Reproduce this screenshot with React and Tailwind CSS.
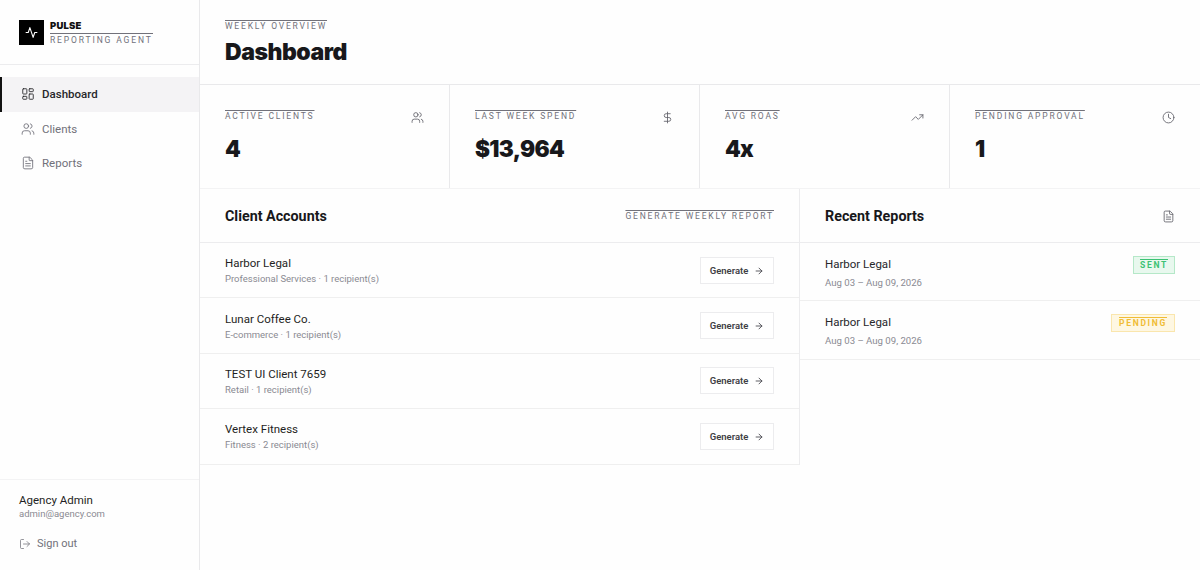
import React from "react";
import { LayoutDashboard, Users, FileText, LogOut, DollarSign, TrendingUp, Clock, ArrowRight } from "lucide-react";

const body = "font-['Roboto',sans-serif]";
const heavy = "font-['Inter',sans-serif] font-black";

function Label({ children, className = "" }) {
  return <span className={`text-[8.5px] leading-[13px] tracking-[0.215em] uppercase overline decoration-1 text-[#71717a] ${className}`}>{children}</span>;
}

function NavItem({ icon: Icon, label, active }) {
  return (
    <div className={`h-[34.5px] flex items-center gap-[7px] pl-[19px] text-[11.5px] border-l-2 ${active ? "bg-[#f4f3f5] border-[#111] text-[#27272a] font-medium" : "border-transparent text-[#71717a]"}`}>
      <Icon size={14} strokeWidth={1.5} className={active ? "text-[#27272a]" : "text-[#71717a]"} />
      <span className="pt-[1px]">{label}</span>
    </div>
  );
}

function Stat({ label, value, icon: Icon, last }) {
  return (
    <div className={`w-[250px] h-full px-[25px] pt-[25px] ${last ? "" : "border-r border-[#e9e9eb]"}`}>
      <div className="flex justify-between items-start">
        <Label>{label}</Label>
        <Icon size={13} strokeWidth={1.6} className="text-[#63636b] mt-[1px]" />
      </div>
      <div className={`${heavy} text-[22.5px] leading-[28px] mt-[11px] text-[#18181b] tracking-[-0.03em]`}>{value}</div>
    </div>
  );
}

function ClientRow({ name, sub }) {
  return (
    <div className="h-[55.4px] flex items-center justify-between pl-[25px] pr-[25px] border-b border-[#efefef]">
      <div>
        <div className="text-[11.5px] leading-[16px] text-[#1f1f23]">{name}</div>
        <div className="text-[9.5px] leading-[13px] mt-[1px] text-[#8a8a92]">{sub}</div>
      </div>
      <button className="w-[74px] h-[27px] border border-[#ececee] bg-white flex items-center justify-center gap-[6px] pt-[1px] text-[9.5px] font-semibold text-[#3f3f46]">
        Generate <ArrowRight size={10} strokeWidth={2} />
      </button>
    </div>
  );
}

function ReportRow({ status, badge }) {
  return (
    <div className="h-[58.4px] flex justify-between pl-[25px] pr-[25px] pt-[13px] border-b border-[#efefef]">
      <div>
        <div className="text-[11.5px] leading-[16px] text-[#27272a]">Harbor Legal</div>
        <div className="text-[9.6px] leading-[13px] mt-[4px] text-[#8a8a92]">Aug 03 – Aug 09, 2026</div>
      </div>
      <span className={`h-[18px] border text-[8.5px] leading-[16px] font-bold tracking-[0.2em] overline ${badge}`}>{status}</span>
    </div>
  );
}

export default function App() {
  return (
    <div className={`${body} w-[1200px] h-[570px] flex bg-[#fefefe] overflow-hidden`}>
      <aside className="w-[200px] h-full border-r border-[#e9e9eb] flex flex-col">
        <div className="h-[65px] border-b border-[#ececee] flex items-center gap-[6px] pl-[19px] shrink-0">
          <div className="w-[25px] h-[25px] bg-black flex items-center justify-center">
            <svg width="13" height="13" viewBox="0 0 24 24" fill="none" stroke="#fff" strokeWidth="2" strokeLinecap="round" strokeLinejoin="round">
              <polyline points="22 12 18 12 15 21 9 3 6 12 2 12" />
            </svg>
          </div>
          <div className="flex flex-col items-start">
            <span className={`${heavy} w-full text-[9.5px] leading-[14px] text-[#111] tracking-[0.02em] border-b border-[#71717a]`}>PULSE</span>
            <span className="text-[8.5px] leading-[12px] tracking-[0.22em] text-[#71717a]">REPORTING AGENT</span>
          </div>
        </div>
        <nav className="pt-3 flex flex-col">
          <NavItem icon={LayoutDashboard} label="Dashboard" active />
          <NavItem icon={Users} label="Clients" />
          <NavItem icon={FileText} label="Reports" />
        </nav>
        <div className="mt-auto border-t border-[#f3f3f4] h-[91px] pl-[19px] pt-[13px]">
          <div className="text-[11.5px] leading-[15px] text-[#1f1f23]">Agency Admin</div>
          <div className="text-[9.5px] leading-[12px] text-[#8a8a92]">admin@agency.com</div>
          <div className="flex items-center gap-[6px] mt-[16px] text-[11px] text-[#71717a]">
            <LogOut size={12} strokeWidth={1.5} />
            <span>Sign out</span>
          </div>
        </div>
      </aside>
      <main className="w-[1000px] flex flex-col">
        <header className="h-[85px] border-b border-[#e9e9eb] pl-[25px] pt-[20px] flex flex-col items-start shrink-0">
          <Label>Weekly Overview</Label>
          <h1 className={`${heavy} text-[23px] leading-[28px] mt-[5px] text-[#18181b] tracking-[-0.02em]`}>Dashboard</h1>
        </header>
        <section className="h-[104px] flex border-b border-[#f3f3f4] shrink-0">
          <Stat label="Active Clients" value="4" icon={Users} />
          <Stat label="Last Week Spend" value="$13,964" icon={DollarSign} />
          <Stat label="Avg ROAS" value="4x" icon={TrendingUp} />
          <Stat label="Pending Approval" value="1" icon={Clock} last />
        </section>
        <section className="flex items-start">
          <div className="w-[600px] border-r border-[#ececee]">
            <div className="h-[54px] flex items-center justify-between px-[25px] pt-[2px] border-b border-[#ececee]">
              <h2 className="text-[14.3px] font-bold text-[#18181b]">Client Accounts</h2>
              <Label>Generate Weekly Report</Label>
            </div>
            <ClientRow name="Harbor Legal" sub="Professional Services · 1 recipient(s)" />
            <ClientRow name="Lunar Coffee Co." sub="E-commerce · 1 recipient(s)" />
            <ClientRow name="TEST UI Client 7659" sub="Retail · 1 recipient(s)" />
            <ClientRow name="Vertex Fitness" sub="Fitness · 2 recipient(s)" />
          </div>
          <div className="w-[400px]">
            <div className="h-[54px] flex items-center justify-between px-[25px] pt-[2px] border-b border-[#ececee]">
              <h2 className="text-[14.3px] font-bold text-[#18181b]">Recent Reports</h2>
              <FileText size={13} strokeWidth={1.6} className="text-[#63636b]" />
            </div>
            <ReportRow status="SENT" badge="px-[6px] bg-[#e8f8ee] border-[#b5e8c8] text-[#3cc274]" />
            <ReportRow status="PENDING" badge="px-[7px] bg-[#fef7e2] border-[#fae6ad] text-[#f0bc35]" />
          </div>
        </section>
      </main>
    </div>
  );
}
